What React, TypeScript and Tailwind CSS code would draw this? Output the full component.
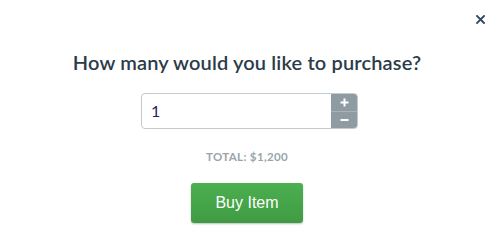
import React from "react";

export default function App() {
  return (
    <div className="relative w-[494px] h-[236px] bg-white overflow-hidden" style={{ fontFamily: "Lato, 'Open Sans', sans-serif" }}>
      <button className="absolute right-[9px] top-[15px] w-[9px] h-[9px]">
        <svg width="9" height="9" viewBox="0 0 9 9" className="block">
          <path d="M1 1 L8 8 M8 1 L1 8" stroke="#2f4a62" strokeWidth="1.9" strokeLinecap="square" />
        </svg>
      </button>
      <div className="flex flex-col items-center pt-[49px]">
        <h2 className="text-[20px] leading-[26px] font-semibold text-[#2c3b48] tracking-[0.15px]">How many would you like to purchase?</h2>
        <div className="mt-[18px] flex w-[217px] h-[36px] ml-[5px] border border-[#c3cbd0] rounded-[4px] overflow-hidden">
          <div className="flex-1 flex items-center pl-[9px] text-[16px] text-[#2a1a66]">1</div>
          <div className="w-[26px] flex flex-col bg-[#8f9ba3]">
            <div className="flex-1 flex items-center justify-center border-b border-[#a9b2b8]">
              <svg width="9" height="9" viewBox="0 0 9 9" className="block">
                <path d="M4.5 0.5 V8.5 M0.5 4.5 H8.5" stroke="#ffffff" strokeWidth="2" />
              </svg>
            </div>
            <div className="flex-1 flex items-center justify-center">
              <svg width="9" height="9" viewBox="0 0 9 9" className="block">
                <path d="M0.5 5 H8.5" stroke="#ffffff" strokeWidth="2" />
              </svg>
            </div>
          </div>
        </div>
        <div className="mt-[19px] text-[11.5px] font-bold text-[#99a5ab] tracking-[0.35px]">TOTAL: $1,200</div>
        <button
          className="mt-[18px] w-[112px] h-[40px] rounded-[3px] bg-gradient-to-b from-[#4caf50] to-[#3f9b43] text-white text-[16px] shadow-[0_1px_2px_rgba(0,0,0,0.25)]"
          style={{ fontFamily: "'Liberation Sans', Arial, sans-serif" }}
        >
          Buy Item
        </button>
      </div>
    </div>
  );
}
